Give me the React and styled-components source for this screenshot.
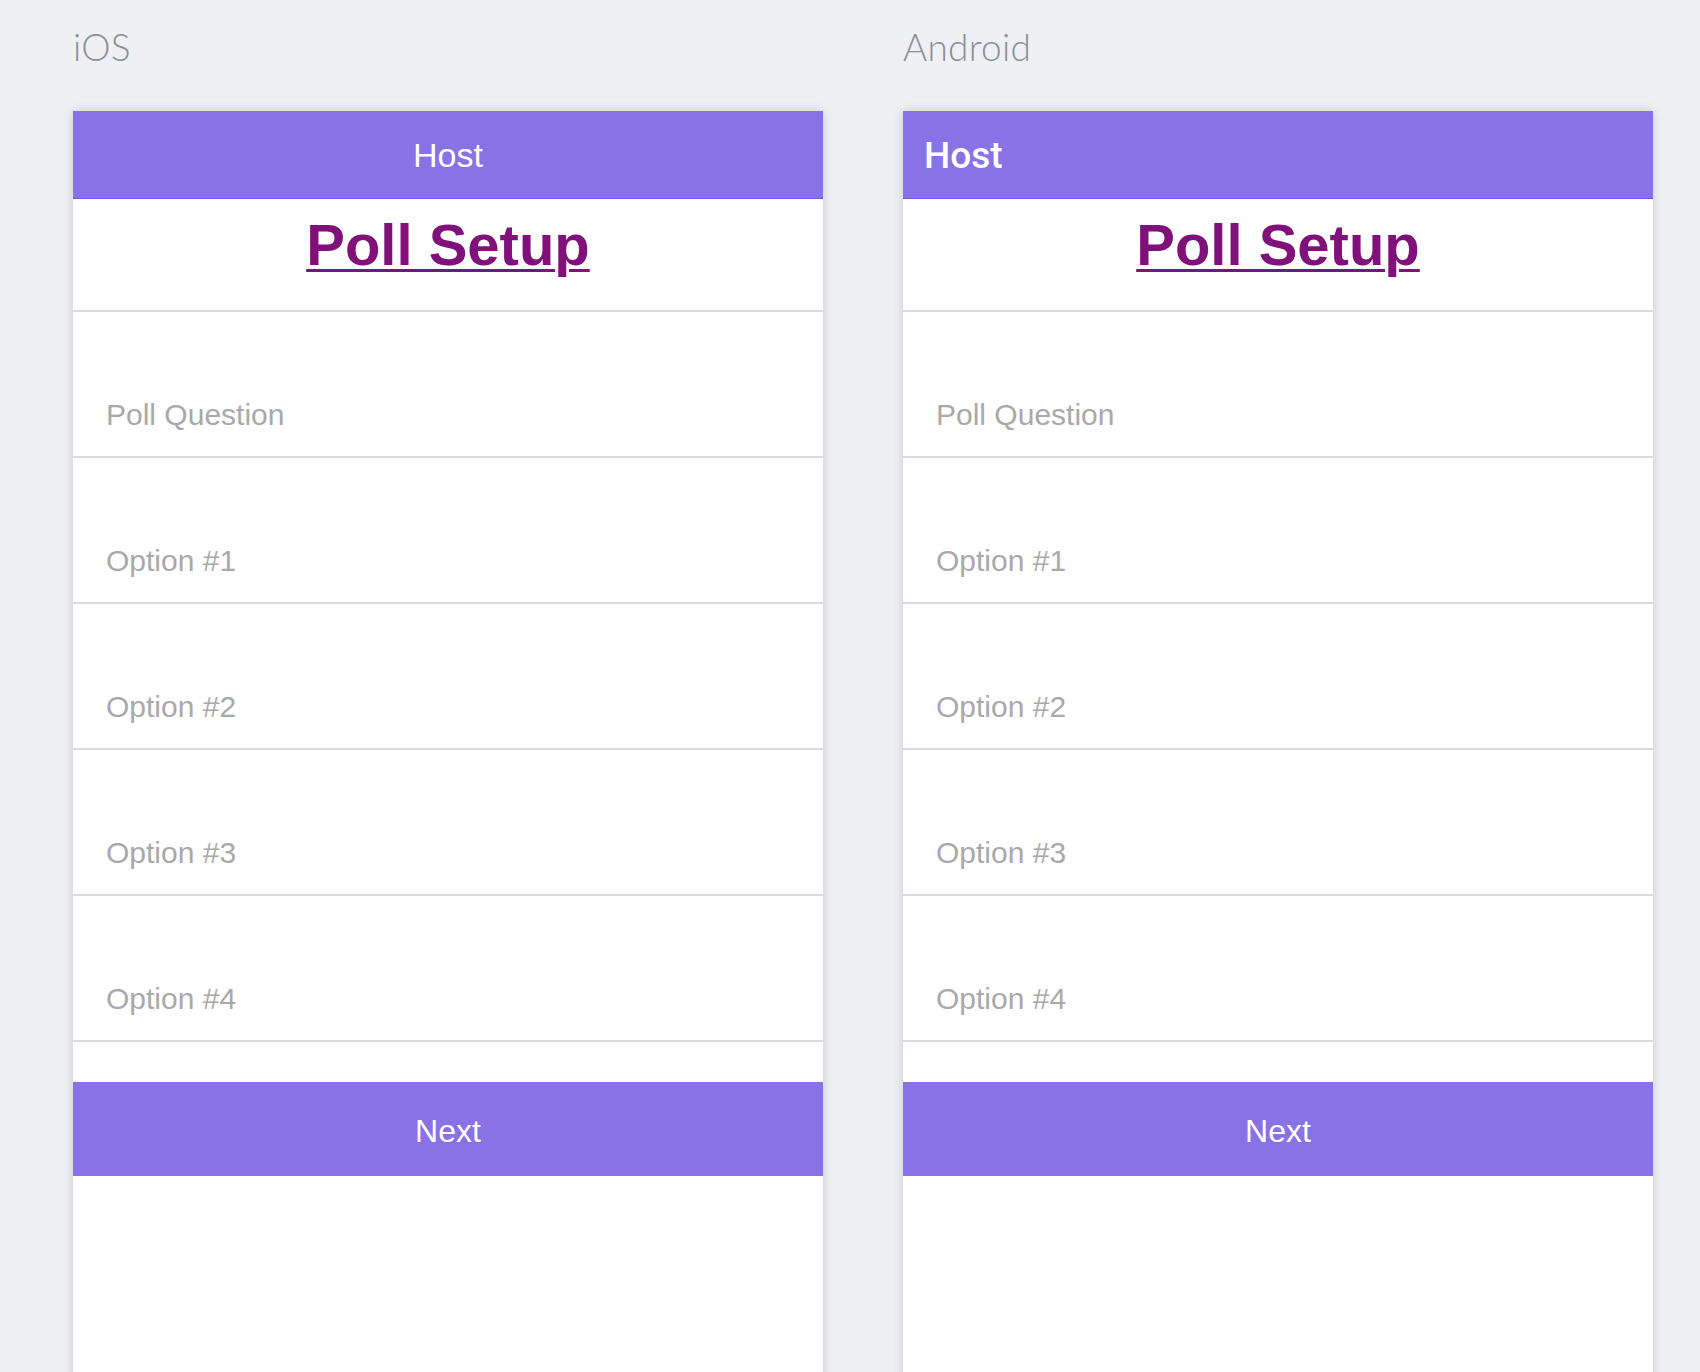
import React from 'react';
import styled, { createGlobalStyle } from 'styled-components';

const GlobalStyle = createGlobalStyle`
  html, body {
    margin: 0;
    padding: 0;
    background: #eff0f4;
    overflow: hidden;
  }
  * { box-sizing: border-box; }
`;

const Page = styled.div`
  display: flex;
  gap: 80px;
  padding: 25px 0 0 73px;
  min-height: 1372px;
`;

const Column = styled.div`
  display: flex;
  flex-direction: column;
  width: 750px;
`;

const PlatformLabel = styled.div`
  font-family: Lato, "Liberation Sans", sans-serif;
  font-weight: 300;
  font-size: 37px;
  line-height: 44px;
  height: 44px;
  margin-bottom: 42px;
  color: #8b8f97;
  letter-spacing: 0.3px;
`;

const Phone = styled.div`
  width: 750px;
  height: 1334px;
  background: #ffffff;
  box-shadow: 0 0 10px rgba(0, 0, 0, 0.16);
  display: flex;
  flex-direction: column;
`;

const HeaderBar = styled.div`
  height: 88px;
  background: #8971e6;
  border-bottom: 1px solid #6f55e6;
  display: flex;
  align-items: center;
  justify-content: ${p => (p.android ? 'flex-start' : 'center')};
  padding: ${p => (p.android ? '2px 0 0 21px' : '0')};
  color: #ffffff;
  font-family: ${p => (p.android ? 'Roboto, "Liberation Sans", sans-serif' : '"Liberation Sans", Arial, sans-serif')};
  font-weight: ${p => (p.android ? 500 : 400)};
  font-size: ${p => (p.android ? '37px' : '34px')};
  line-height: 1;
`;

const TitleBlock = styled.div`
  height: 113px;
  padding-top: 17px;
  border-bottom: 2px solid #dcdcdc;
  text-align: center;
`;

const Title = styled.span`
  font-family: "Liberation Sans", Arial, sans-serif;
  font-weight: 700;
  font-size: 58px;
  line-height: 58px;
  color: #80107a;
  text-decoration: underline;
  text-decoration-thickness: 3px;
  text-underline-offset: 4px;
`;

const FieldRow = styled.div`
  height: 146px;
  border-bottom: 2px solid #dcdcdc;
  display: flex;
  align-items: flex-end;
  padding: 0 0 26px 33px;
`;

const Placeholder = styled.span`
  font-family: "Liberation Sans", Arial, sans-serif;
  font-size: 30px;
  line-height: 30px;
  color: #a9a9a9;
`;

const NextButton = styled.div`
  margin-top: 40px;
  height: 94px;
  padding-top: 4px;
  background: #8971e6;
  display: flex;
  align-items: center;
  justify-content: center;
  color: #ffffff;
  font-family: "Liberation Sans", Arial, sans-serif;
  font-size: 32px;
  line-height: 1;
`;

const fields = ['Poll Question', 'Option #1', 'Option #2', 'Option #3', 'Option #4'];

const PollScreen = ({ android }) => (
  <Phone>
    <HeaderBar android={android}>Host</HeaderBar>
    <TitleBlock>
      <Title>Poll Setup</Title>
    </TitleBlock>
    {fields.map(f => (
      <FieldRow key={f}>
        <Placeholder>{f}</Placeholder>
      </FieldRow>
    ))}
    <NextButton>Next</NextButton>
  </Phone>
);

export default function App() {
  return (
    <>
      <GlobalStyle />
      <Page>
        <Column>
          <PlatformLabel>iOS</PlatformLabel>
          <PollScreen />
        </Column>
        <Column>
          <PlatformLabel>Android</PlatformLabel>
          <PollScreen android />
        </Column>
      </Page>
    </>
  );
}
